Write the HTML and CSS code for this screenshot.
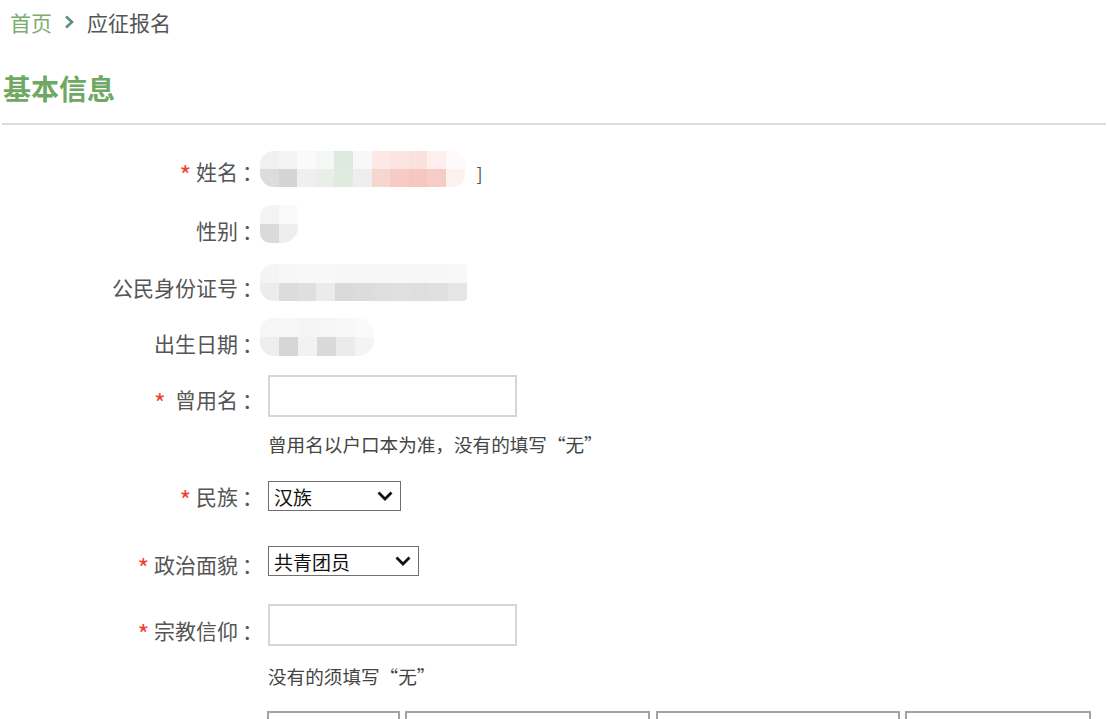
FILE: index.html
```html
<!DOCTYPE html>
<html lang="zh-CN">
<head>
<meta charset="utf-8">
<title>应征报名</title>
<link rel="stylesheet" href="styles.css">
</head>
<body>
<nav class="crumb">
  <a class="crumb-home" href="#">首页</a>
  <svg class="crumb-sep" width="10" height="14" viewBox="0 0 10 14"><path d="M2 1.5 L8 7 L2 12.5" fill="none" stroke="#5f8e80" stroke-width="2.6"/></svg>
  <span class="crumb-cur">应征报名</span>
</nav>
<h2 class="section-title">基本信息</h2>
<div class="rule"></div>

<div class="form">
  <div class="row r1">
    <label class="lbl lbl-up"><span class="req">*</span> 姓名<span class="colon">：</span></label>
    <div class="val">
      <div class="blur blur-name">
        <i style="background:#f0f0f0"></i><i style="background:#f4f4f4"></i><i style="background:#fafafa"></i><i style="background:#f4f7f4"></i><i style="background:#dde9dd"></i><i style="background:#f8f8f8"></i><i style="background:#fce9e6"></i><i style="background:#fbe4e1"></i><i style="background:#fbe1de"></i><i style="background:#fdefed"></i><i style="background:#fefafa"></i>
        <i style="background:#dcdcdc"></i><i style="background:#d3d4d3"></i><i style="background:#efeff0"></i><i style="background:#e7efe6"></i><i style="background:#e0ebe0"></i><i style="background:#eeeeef"></i><i style="background:#f8d6d0"></i><i style="background:#f6cbc4"></i><i style="background:#f6c7c1"></i><i style="background:#f7ccc6"></i><i style="background:#fdf2f0"></i>
      </div>
      <span class="bracket">]</span>
    </div>
  </div>

  <div class="row r2">
    <label class="lbl lbl-up">性别<span class="colon">：</span></label>
    <div class="val">
      <div class="blur blur-sex">
        <i style="background:#f3f3f3"></i><i style="background:#fafafa"></i>
        <i style="background:#dadada"></i><i style="background:#eeeeee"></i>
      </div>
    </div>
  </div>

  <div class="row r3">
    <label class="lbl lbl-up">公民身份证号<span class="colon">：</span></label>
    <div class="val">
      <div class="blur blur-id">
        <i style="background:#f4f4f4"></i><i style="background:#f7f7f7"></i><i style="background:#f8f8f8"></i><i style="background:#f8f8f8"></i><i style="background:#f7f7f7"></i><i style="background:#f7f7f7"></i><i style="background:#f7f7f7"></i><i style="background:#f7f7f7"></i><i style="background:#f6f6f6"></i><i style="background:#f7f7f7"></i><i style="background:#f8f8f8"></i>
        <i style="background:#ececec"></i><i style="background:#dcdcdc"></i><i style="background:#dfdfdf"></i><i style="background:#ebebeb"></i><i style="background:#dadada"></i><i style="background:#dcdcdc"></i><i style="background:#dedede"></i><i style="background:#e0e0e0"></i><i style="background:#dedede"></i><i style="background:#e0e0e0"></i><i style="background:#e6e6e6"></i>
      </div>
    </div>
  </div>

  <div class="row r4">
    <label class="lbl lbl-up">出生日期<span class="colon">：</span></label>
    <div class="val">
      <div class="blur blur-birth">
        <i style="background:#f6f6f6"></i><i style="background:#f7f7f7"></i><i style="background:#f5f5f5"></i><i style="background:#f6f6f6"></i><i style="background:#f8f8f8"></i><i style="background:#fafafa"></i>
        <i style="background:#eeeeee"></i><i style="background:#d6d6d6"></i><i style="background:#f2f2f2"></i><i style="background:#d9d9d9"></i><i style="background:#ebebeb"></i><i style="background:#f4f4f4"></i>
      </div>
    </div>
  </div>

  <div class="row r5">
    <label class="lbl lbl-low"><span class="req">*</span>&nbsp;&nbsp;曾用名<span class="colon">：</span></label>
    <div class="val"><div class="text-input"></div></div>
  </div>
  <div class="hint h1">曾用名以户口本为准，没有的填写“无”</div>

  <div class="row r6">
    <label class="lbl"><span class="req">*</span> 民族<span class="colon">：</span></label>
    <div class="val">
      <div class="select sel-nation"><span>汉族</span>
        <svg width="16" height="10" viewBox="0 0 16 10"><path d="M1.5 1.5 L8 8 L14.5 1.5" fill="none" stroke="#111" stroke-width="2.8"/></svg>
      </div>
    </div>
  </div>

  <div class="row r7">
    <label class="lbl lbl-low"><span class="req">*</span> 政治面貌<span class="colon">：</span></label>
    <div class="val">
      <div class="select sel-party"><span>共青团员</span>
        <svg width="16" height="10" viewBox="0 0 16 10"><path d="M1.5 1.5 L8 8 L14.5 1.5" fill="none" stroke="#111" stroke-width="2.8"/></svg>
      </div>
    </div>
  </div>

  <div class="row r8">
    <label class="lbl lbl-lower"><span class="req">*</span> 宗教信仰<span class="colon">：</span></label>
    <div class="val"><div class="text-input"></div></div>
  </div>
  <div class="hint h2">没有的须填写“无”</div>

  <div class="row r9">
    <div></div>
    <div class="val boxes">
      <div class="box b1"></div>
      <div class="box b2"></div>
      <div class="box b3"></div>
      <div class="box b4"></div>
    </div>
  </div>
</div>
</body>
</html>
```

FILE: styles.css
```css
html, body {
  margin: 0;
  padding: 0;
  background: #fff;
  overflow: hidden;
}
body {
  width: 1107px;
  height: 719px;
  font-family: "Noto Sans CJK SC", "Microsoft YaHei", sans-serif;
  color: #555;
}

.crumb {
  display: flex;
  align-items: center;
  height: 44px;
  padding-left: 10px;
  font-size: 21px;
}
.crumb-home {
  color: #7aae6c;
  text-decoration: none;
}
.crumb-sep {
  margin: 0 13px 0 12px;
}
.crumb-cur {
  color: #555;
}

.section-title {
  margin: 22px 0 0 0;
  padding-left: 3px;
  height: 44px;
  line-height: 44px;
  font-size: 28px;
  font-weight: bold;
  color: #6ea862;
}

.rule {
  margin: 13px 1px 0 2px;
  height: 2px;
  background: #dcdcdc;
}

.form {
  display: flex;
  flex-direction: column;
}

.row {
  display: grid;
  grid-template-columns: 259px 1fr;
  grid-template-rows: 42px;
  column-gap: 9px;
  height: 42px;
  align-items: center;
}
.r1 { margin-top: 27px; }
.r2 { margin-top: 17px; }
.r3 { margin-top: 15px; }
.r4 { margin-top: 14px; }
.r5 { margin-top: 9px; }
.r6 { margin-top: 18px; }
.r7 { margin-top: 23px; }
.r8 { margin-top: 22px; }
.r9 { margin-top: 22px; align-items: start; }

.lbl {
  text-align: right;
  font-size: 21px;
  line-height: 28px;
  color: #555;
  white-space: nowrap;
}
.lbl-up { padding-bottom: 4px; }
.lbl-low { padding-top: 6px; }
.lbl-lower { padding-top: 9px; }
.colon {
  margin-left: 4px;
  margin-right: -4px;
}
.req {
  color: #f0432f;
  font-size: 25px;
  line-height: 0;
  vertical-align: -5px;
}

.val {
  display: flex;
  align-items: center;
}

.blur {
  display: grid;
  grid-auto-flow: row;
  grid-auto-rows: 18px;
  margin-left: -8px;
  border-radius: 14px 12px 12px 14px;
  overflow: hidden;
}
.blur i { display: block; }
.r1 .val, .r2 .val, .r3 .val, .r4 .val { align-self: start; }
.blur-name {
  grid-template-columns: repeat(11, 18.6px);
  margin-top: -1px;
}
.blur-sex {
  grid-template-columns: repeat(2, 19px);
  grid-auto-rows: 19px;
  border-radius: 12px 4px 16px 10px;
  margin-top: -6px;
}
.blur-id {
  grid-template-columns: repeat(11, 18.8px);
  grid-auto-rows: 18.5px;
  border-radius: 14px 4px 4px 14px;
  margin-top: -4px;
}
.blur-birth {
  grid-template-columns: repeat(6, 19px);
  grid-auto-rows: 19px;
  border-radius: 14px 16px 16px 14px;
  margin-top: -6px;
}
.bracket {
  margin-left: 12px;
  font-size: 18px;
  color: #555;
}
.r1 .bracket { margin-top: 6px; }

.text-input {
  width: 245px;
  height: 38px;
  border: 2px solid #d6d6d6;
  background: #fff;
}

.hint {
  margin-top: 14px;
  margin-left: 268px;
  height: 26px;
  line-height: 26px;
  font-size: 18.6px;
  color: #444;
}
.hint.h2 { margin-top: 17px; }

.select {
  display: flex;
  align-items: center;
  justify-content: space-between;
  box-sizing: border-box;
  height: 30px;
  border: 1px solid #6f6f6f;
  padding: 0 7px 0 5px;
  font-size: 19px;
  color: #111;
  background: #fff;
}
.sel-nation { width: 133px; }
.sel-party { width: 151px; }

.boxes {
  align-items: flex-start;
  margin-left: -1px;
}
.box {
  height: 30px;
  box-sizing: border-box;
  border: 2px solid #a3a3a3;
  background: #fff;
}
.b1 { width: 133px; }
.b2 { width: 245px; margin-left: 5px; }
.b3 { width: 244px; margin-left: 6px; }
.b4 { width: 186px; margin-left: 5px; }
```
